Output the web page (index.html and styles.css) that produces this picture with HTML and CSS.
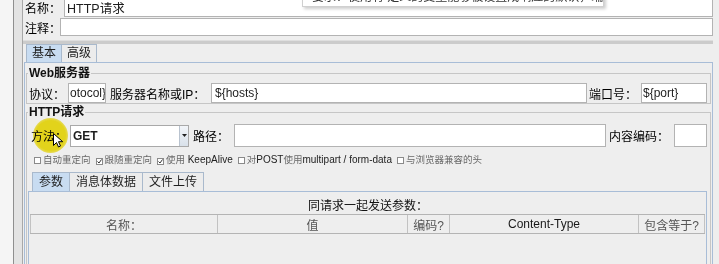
FILE: index.html
```html
<!DOCTYPE html>
<html lang="zh-CN">
<head>
    <meta charset="UTF-8">
    <meta name="viewport" content="width=device-width, initial-scale=1.0">
    <title>HTTP请求</title>
    <link rel="stylesheet" href="styles.css">
</head>
<body>

<div class="window">
    <div class="tree-edge"></div>
    <div class="split"></div>

    <div class="main">
        <div class="tooltip">要求：使用有 定义的变量能够被设置成响应的默认，端口和编码</div>

        <div class="row name-row">
            <label>名称：</label>
            <div class="field">HTTP请求</div>
        </div>
        <div class="row comment-row">
            <label>注释：</label>
            <div class="field"></div>
        </div>

        <div class="divider"></div>

        <div class="tabs">
            <span class="tab active">基本</span>
            <span class="tab">高级</span>
        </div>

        <div class="tab-panel">
            <fieldset class="group web-group">
                <legend><b>Web服务器</b></legend>
                <div class="row web-row">
                    <label class="lbl-proto">协议：</label>
                    <div class="field f-proto">otocol}</div>
                    <label class="lbl-host">服务器名称或IP：</label>
                    <div class="field f-host">${hosts}</div>
                    <label class="lbl-port">端口号：</label>
                    <div class="field f-port">${port}</div>
                </div>
            </fieldset>

            <fieldset class="group http-group">
                <legend><b>HTTP请求</b></legend>
                <div class="row http-row">
                    <label class="lbl-method">方法：</label>
                    <div class="combo">
                        <div class="combo-value">GET</div>
                        <div class="combo-arrow">
                            <svg width="5" height="3" viewBox="0 0 5 3"><path d="M0 0h5L2.5 3z" fill="#222"/></svg>
                        </div>
                    </div>
                    <label class="lbl-path">路径：</label>
                    <div class="field f-path"></div>
                    <label class="lbl-enc">内容编码：</label>
                    <div class="field f-enc"></div>
                </div>

                <div class="checks">
                    <span class="check"><i class="box"></i>自动重定向</span>
                    <span class="check"><i class="box on"><svg width="5" height="5" viewBox="0 0 5 5"><path d="M0.5 2.5l1.5 1.5 2.5-3.5" fill="none" stroke="#333" stroke-width="1"/></svg></i>跟随重定向</span>
                    <span class="check"><i class="box on"><svg width="5" height="5" viewBox="0 0 5 5"><path d="M0.5 2.5l1.5 1.5 2.5-3.5" fill="none" stroke="#333" stroke-width="1"/></svg></i>使用 <em>KeepAlive</em></span>
                    <span class="check"><i class="box"></i>对<em>POST</em>使用<em>multipart / form-data</em></span>
                    <span class="check"><i class="box"></i>与浏览器兼容的头</span>
                </div>

                <div class="tabs sub-tabs">
                    <span class="tab active">参数</span>
                    <span class="tab">消息体数据</span>
                    <span class="tab">文件上传</span>
                </div>

                <div class="params">
                    <div class="params-title">同请求一起发送参数：</div>
                    <div class="table-head">
                        <div class="th">名称：</div>
                        <div class="th">值</div>
                        <div class="th">编码?</div>
                        <div class="th dark">Content-Type</div>
                        <div class="th">包含等于?</div>
                    </div>
                    <div class="table-body"></div>
                </div>
            </fieldset>
        </div>
    </div>

    <!-- подсветка курсора из записи экрана -->
    <div class="highlight"></div>
    <svg class="cursor" width="11" height="15" viewBox="0 0 11 15">
        <path d="M0.5 0.5v12l3-3 2 4.5 2-1-2-4.3h4.2z" fill="#fff" stroke="#000" stroke-width="1" stroke-linejoin="round"/>
    </svg>
</div>

</body>
</html>
```

FILE: styles.css
```css
* {
    box-sizing: border-box;
}
body {
    margin: 0;
    background-color: #eeeeee;
    font-family: "Liberation Sans", "Noto Sans CJK SC", sans-serif;
    font-size: 12px;
    color: #1e1e1e;
    overflow: hidden;
}
.window {
    position: relative;
    display: flex;
    width: 719px;
    height: 264px;
    overflow: hidden;
}
.tree-edge {
    width: 16px;
    background-color: #f5f5f5;
    border-right: 1px solid #8f8f8f;
}
.split {
    width: 10px;
    background-color: #e3e3e3;
    border-right: 1px solid #a8a8a8;
}
.main {
    position: relative;
    flex: 1;
    display: flex;
    flex-direction: column;
    padding-right: 6px;
}
.main > * {
    flex-shrink: 0;
}
.row {
    display: flex;
    align-items: center;
}
label {
    flex-shrink: 0;
    white-space: nowrap;
    color: #000;
}
.field {
    display: flex;
    align-items: center;
    height: 100%;
    padding: 0 2px;
    background-color: #fff;
    border: 1px solid #b3b3b3;
    white-space: nowrap;
    overflow: hidden;
}
.name-row {
    height: 20px;
    margin-top: -3px;
    padding-left: 2px;
}
.name-row label {
    width: 39px;
}
.name-row .field {
    flex: 1;
    font-size: 12.5px;
}
.comment-row {
    height: 18px;
    margin-top: 1px;
    padding-left: 2px;
}
.comment-row label {
    width: 35px;
}
.comment-row .field {
    flex: 1;
}
.divider {
    height: 4px;
    margin-top: 4px;
    background-color: #cbcbcb;
    border-top: 1px solid #dedede;
}
.tabs {
    display: flex;
    height: 18px;
    padding-left: 3px;
}
.tab {
    line-height: 17px;
    padding: 0 5px;
    margin-right: -1px;
    border: 1px solid #a9b9cc;
    border-bottom: none;
    background-color: #ececec;
    white-space: nowrap;
}
.tab.active {
    background-color: #c8dcf1;
}
.tab-panel {
    flex-grow: 1;
    margin-left: 1px;
    padding: 3px 1px 0;
    border: 1px solid #a8bdd7;
    border-bottom: none;
}
.group {
    margin: 0;
    padding: 0 1px 0 1px;
    min-width: 0;
    border: 1px solid #c6c6c6;
}
.group legend {
    padding: 0 1px;
    line-height: 14px;
    color: #111;
}
.web-row {
    height: 20px;
    margin-top: 3px;
    padding: 0 2px 0 1px;
}
.lbl-proto {
    width: 39px;
}
.f-proto {
    width: 38px;
    padding: 0 1px;
}
.lbl-host {
    width: 105px;
    padding-left: 4px;
}
.f-host {
    flex: 1;
    padding-left: 3px;
}
.lbl-port {
    width: 54px;
    padding-left: 2px;
}
.f-port {
    width: 66px;
    padding-left: 1px;
}
.http-group {
    margin-top: 1px;
    border-bottom: none;
}
.http-row {
    height: 23px;
    margin-top: 5px;
    padding: 0 2px 0 3px;
}
.lbl-method {
    width: 39px;
}
.combo {
    display: flex;
    width: 119px;
    height: 22px;
    border: 1px solid #a9a9a9;
    background-color: #fff;
}
.combo-value {
    flex: 1;
    padding-left: 2px;
    line-height: 20px;
    font-weight: bold;
}
.combo-arrow {
    width: 9px;
    display: flex;
    align-items: center;
    justify-content: center;
    border-left: 1px solid #b9c3cf;
    background: linear-gradient(#f2f5f9, #d9e1ea);
}
.lbl-path {
    width: 45px;
    padding-left: 4px;
}
.f-path {
    flex: 1;
}
.lbl-enc {
    width: 68px;
    padding-left: 3px;
}
.f-enc {
    width: 33px;
}
.checks {
    display: flex;
    gap: 5px;
    height: 12px;
    margin-top: 7px;
    padding-left: 6px;
    font-size: 9.5px;
    line-height: 12px;
    color: #6a6a6a;
    white-space: nowrap;
}
.check em {
    font-style: normal;
    font-size: 10px;
    color: #222;
}
.box {
    display: inline-flex;
    align-items: center;
    justify-content: center;
    width: 7px;
    height: 7px;
    margin-right: 2px;
    vertical-align: -0.5px;
    border: 1px solid #8a8a8a;
    background-color: #fff;
}
.sub-tabs {
    height: 19px;
    margin-top: 6px;
    padding-left: 4px;
}
.sub-tabs .tab {
    line-height: 18px;
    padding: 0 6px;
}
.params {
    height: 80px;
    margin-right: 2px;
    padding: 0 0 0 1px;
    border: 1px solid #a8bdd7;
}
.params-title {
    margin-top: 6px;
    line-height: 16px;
    text-align: center;
    color: #111;
}
.table-head {
    display: grid;
    grid-template-columns: 188px 190px 42px 189px 66px;
    height: 20px;
    margin-right: 1px;
    border-top: 1px solid #b4b4b4;
    border-bottom: 1px solid #b4b4b4;
}
.th {
    display: flex;
    align-items: center;
    justify-content: center;
    border-right: 1px solid #c2c2c2;
    color: #555;
    white-space: nowrap;
    overflow: hidden;
}
.th:first-child {
    border-left: 1px solid #c2c2c2;
}
.th.dark {
    color: #1a1a1a;
}
.highlight {
    position: absolute;
    left: 33px;
    top: 118px;
    width: 35px;
    height: 35px;
    border-radius: 50%;
    background: radial-gradient(circle, #f3e21c 60%, rgba(243, 226, 28, 0.6) 75%, rgba(243, 226, 28, 0) 100%);
    mix-blend-mode: multiply;
}
.cursor {
    position: absolute;
    left: 53px;
    top: 133px;
}
.tooltip {
    position: absolute;
    left: 279px;
    top: -11px;
    width: 302px;
    height: 18px;
    padding-left: 9px;
    line-height: 14px;
    background-color: #fff;
    border: 1px solid #d0d0d0;
    box-shadow: 2px 2px 3px rgba(0, 0, 0, 0.2);
    color: #333;
    white-space: nowrap;
    overflow: hidden;
    z-index: 2;
}
```
